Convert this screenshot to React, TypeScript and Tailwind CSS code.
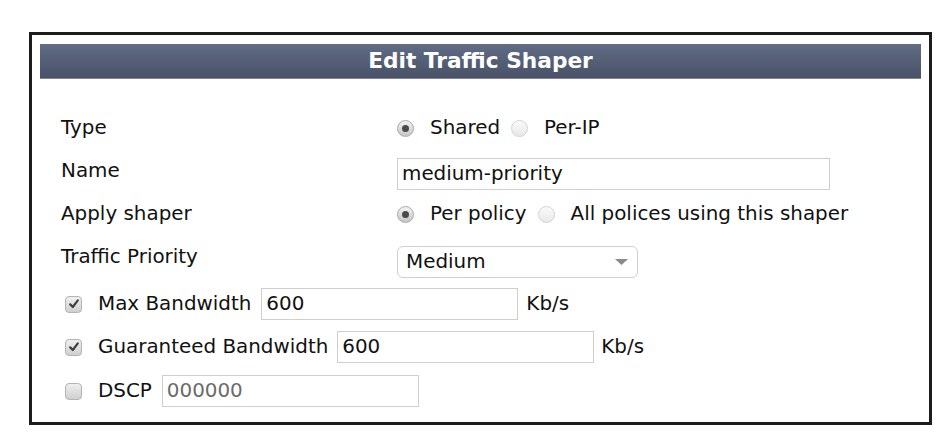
import React from 'react'

function Radio({ checked }: { checked?: boolean }) {
  return checked ? (
    <span className="flex h-[17px] w-[17px] shrink-0 items-center justify-center rounded-full border border-[#a9a9a9] bg-gradient-to-b from-[#f2f2f2] to-[#c6c6c6]">
      <span className="h-[7px] w-[7px] rounded-full bg-[#4a4a4a]" />
    </span>
  ) : (
    <span className="block h-[17px] w-[17px] shrink-0 rounded-full border border-[#d3d3d3] bg-gradient-to-b from-[#fbfbfb] to-[#e8e8e8]" />
  )
}

function Check({ checked }: { checked?: boolean }) {
  return (
    <span className="flex h-[17px] w-[17px] shrink-0 items-center justify-center rounded-[4px] border border-[#b4b4b4] bg-gradient-to-b from-[#f0f0f0] to-[#cfcfcf]">
      {checked && (
        <svg width="12" height="12" viewBox="0 0 12 12">
          <path d="M2.2 6.4 L4.8 9 L9.8 2.4" fill="none" stroke="#3f3f3f" strokeWidth="2.2" strokeLinecap="round" strokeLinejoin="round" />
        </svg>
      )}
    </span>
  )
}

function TextBox({ value, w, muted }: { value: string; w: string; muted?: boolean }) {
  return (
    <div className={`flex h-[32px] items-center border border-[#cfcfcf] bg-white pl-[4px] ${w} ${muted ? 'text-[#6b6b6b]' : 'text-[#111]'}`}>
      {value}
    </div>
  )
}

export default function App() {
  return (
    <div className="h-[448px] w-[952px] bg-white pl-[29px] pt-[32px] text-[19.9px] leading-none text-[#111]" style={{ fontFamily: '"DejaVu Sans", Verdana, sans-serif' }}>
      <div className="h-[393px] w-[903px] border-[3px] border-[#1c1c1c] px-[8px] pt-[9px]">
        <div className="flex h-[35px] items-center justify-center border-b border-[#7d8497] bg-gradient-to-b from-[#616d86] to-[#485166] text-[21.7px] font-bold text-white">
          Edit Traffic Shaper
        </div>

        <div className="flex flex-col pl-[21px] pt-[33px]">
          <div className="flex h-[32px] items-center">
            <div className="w-[336px]">Type</div>
            <Radio checked />
            <span className="ml-[16px]">Shared</span>
            <span className="ml-[11px]"><Radio /></span>
            <span className="ml-[16px]">Per-IP</span>
          </div>

          <div className="mt-[14px] flex h-[32px] items-center">
            <div className="w-[336px] -translate-y-[3px]">Name</div>
            <TextBox value="medium-priority" w="w-[433px]" />
          </div>

          <div className="mt-[8px] flex h-[32px] items-center">
            <div className="w-[336px]">Apply shaper</div>
            <Radio checked />
            <span className="ml-[16px]">Per policy</span>
            <span className="ml-[11px]"><Radio /></span>
            <span className="ml-[16px]">All polices using this shaper</span>
          </div>

          <div className="mt-[16px] flex h-[32px] items-center">
            <div className="w-[336px] -translate-y-[5px]">Traffic Priority</div>
            <div className="flex h-[32px] w-[241px] items-center justify-between rounded-[6px] border border-[#cfcfcf] bg-white pl-[8px] pr-[9px]">
              <span>Medium</span>
              <svg width="13" height="6" viewBox="0 0 13 6">
                <path d="M0 0 H13 L6.5 6 Z" fill="#8a8a8a" />
              </svg>
            </div>
          </div>

          <div className="mt-[10px] flex h-[32px] items-center pl-[4px]">
            <Check checked />
            <span className="ml-[16px]">Max Bandwidth</span>
            <span className="ml-[10px]"><TextBox value="600" w="w-[257px]" /></span>
            <span className="ml-[8px]">Kb/s</span>
          </div>

          <div className="mt-[11px] flex h-[32px] items-center pl-[4px]">
            <Check checked />
            <span className="ml-[16px]">Guaranteed Bandwidth</span>
            <span className="ml-[9px]"><TextBox value="600" w="w-[257px]" /></span>
            <span className="ml-[7px]">Kb/s</span>
          </div>

          <div className="mt-[12px] flex h-[32px] items-center pl-[4px]">
            <Check />
            <span className="ml-[16px]">DSCP</span>
            <span className="ml-[10px]"><TextBox value="000000" w="w-[257px]" muted /></span>
          </div>
        </div>
      </div>
    </div>
  )
}
